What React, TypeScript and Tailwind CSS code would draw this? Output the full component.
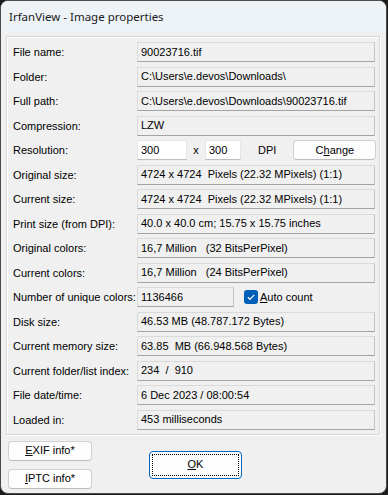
import React from 'react'

type Row = { label: string; value?: React.ReactNode }

const font = { fontFamily: '"Liberation Sans", Arial, sans-serif' }

function ValueBox({ children, className = '' }: { children: React.ReactNode; className?: string }) {
  return (
    <div
      className={`h-[20px] flex items-center pl-[3px] bg-[#f0f0f0] border border-[#dadada] border-b-[#a3a3a3] border-r-[#c4c4c4] whitespace-pre ${className}`}
    >
      {children}
    </div>
  )
}

function Btn({ children, className = '' }: { children: React.ReactNode; className?: string }) {
  return (
    <button className={`flex items-center justify-center rounded-[4px] border border-[#d0d0d0] border-b-[#bcbcbc] bg-[#fdfdfd] text-black ${className}`}>
      {children}
    </button>
  )
}

export default function App() {
  const rows: Row[] = [
    { label: 'File name:', value: '90023716.tif' },
    { label: 'Folder:', value: 'C:\\Users\\e.devos\\Downloads\\' },
    { label: 'Full path:', value: 'C:\\Users\\e.devos\\Downloads\\90023716.tif' },
    { label: 'Compression:', value: 'LZW' },
    { label: 'Resolution:' },
    { label: 'Original size:', value: '4724 x 4724  Pixels (22.32 MPixels) (1:1)' },
    { label: 'Current size:', value: '4724 x 4724  Pixels (22.32 MPixels) (1:1)' },
    { label: 'Print size (from DPI):', value: '40.0 x 40.0 cm; 15.75 x 15.75 inches' },
    { label: 'Original colors:', value: '16,7 Million   (32 BitsPerPixel)' },
    { label: 'Current colors:', value: '16,7 Million   (24 BitsPerPixel)' },
    { label: 'Number of unique colors:' },
    { label: 'Disk size:', value: '46.53 MB (48.787.172 Bytes)' },
    { label: 'Current memory size:', value: '63.85  MB (66.948.568 Bytes)' },
    { label: 'Current folder/list index:', value: '234  /  910' },
    { label: 'File date/time:', value: '6 Dec 2023 / 08:00:54' },
    { label: 'Loaded in:', value: '453 milliseconds' },
  ]

  return (
    <div className="w-[388px] h-[495px] bg-[#1c1c1c] overflow-hidden text-[11px] text-black" style={font}>
      <div className="w-[387px] h-[494px] rounded-[8px] bg-[#f0f0f0] border border-[#4a4a4a] overflow-hidden flex flex-col">
        {/* title bar */}
        <div
          className="h-[31px] shrink-0 bg-[#eef3f8] flex items-center pl-[8px] text-[11.5px] text-[#1a1a1a]"
          style={{ fontFamily: '"Noto Sans", "Open Sans", sans-serif' }}
        >
          IrfanView - Image properties
        </div>

        {/* properties group */}
        <div className="mt-[4px] ml-[5px] w-[374px] border border-[#d8d8d8] shadow-[inset_1px_1px_0_#ffffff,1px_1px_0_#ffffff] pt-[5px] pb-[4px] pl-[6px] pr-[4px]">
          <div className="flex flex-col gap-[4.5px]">
            {rows.map((r) => (
              <div key={r.label} className="flex items-center h-[20px]">
                <div className="w-[124px] shrink-0 pt-[1px]">{r.label}</div>
                {r.label === 'Resolution:' ? (
                  <div className="flex items-center flex-1">
                    <div className="w-[50px] h-[20px] bg-white border border-[#e6e6e6] border-b-[#bdbdbd] flex items-center pl-[3px]">300</div>
                    <div className="w-[18px] text-center">x</div>
                    <div className="w-[36px] h-[20px] bg-white border border-[#e6e6e6] border-b-[#bdbdbd] flex items-center pl-[3px]">300</div>
                    <div className="ml-[17px]">DPI</div>
                    <Btn className="ml-[17px] w-[83px] h-[20px]">
                      <span>
                        C<span className="underline">h</span>ange
                      </span>
                    </Btn>
                  </div>
                ) : r.label === 'Number of unique colors:' ? (
                  <div className="flex items-center flex-1">
                    <ValueBox className="w-[97px]">1136466</ValueBox>
                    <div className="ml-[10px] w-[14px] h-[14px] rounded-[3px] bg-[#005fb8] flex items-center justify-center">
                      <svg width="10" height="10" viewBox="0 0 10 10">
                        <path d="M1.8 5.2 L4 7.3 L8.3 2.8" fill="none" stroke="#fff" strokeWidth="1.2" />
                      </svg>
                    </div>
                    <div className="ml-[2px]">
                      <span className="underline">A</span>uto count
                    </div>
                  </div>
                ) : (
                  <ValueBox className="flex-1">{r.value}</ValueBox>
                )}
              </div>
            ))}
          </div>
        </div>

        {/* bottom buttons */}
        <div className="flex ml-[7px] mt-[6px]">
          <div className="flex flex-col gap-[8px]">
            <Btn className="w-[84px] h-[20px]">
              <span>
                <span className="underline">E</span>XIF info*
              </span>
            </Btn>
            <Btn className="w-[84px] h-[20px]">
              <span>
                <span className="underline">I</span>PTC info*
              </span>
            </Btn>
          </div>
          <button className="ml-[57px] mt-[10px] w-[93px] h-[28px] rounded-[4px] border border-[#0067c0] bg-[#fdfdfd] p-[2px]">
            <div className="w-full h-full border border-dotted border-black flex items-center justify-center">
              <span>
                <span className="underline">O</span>K
              </span>
            </div>
          </button>
        </div>
      </div>
    </div>
  )
}
